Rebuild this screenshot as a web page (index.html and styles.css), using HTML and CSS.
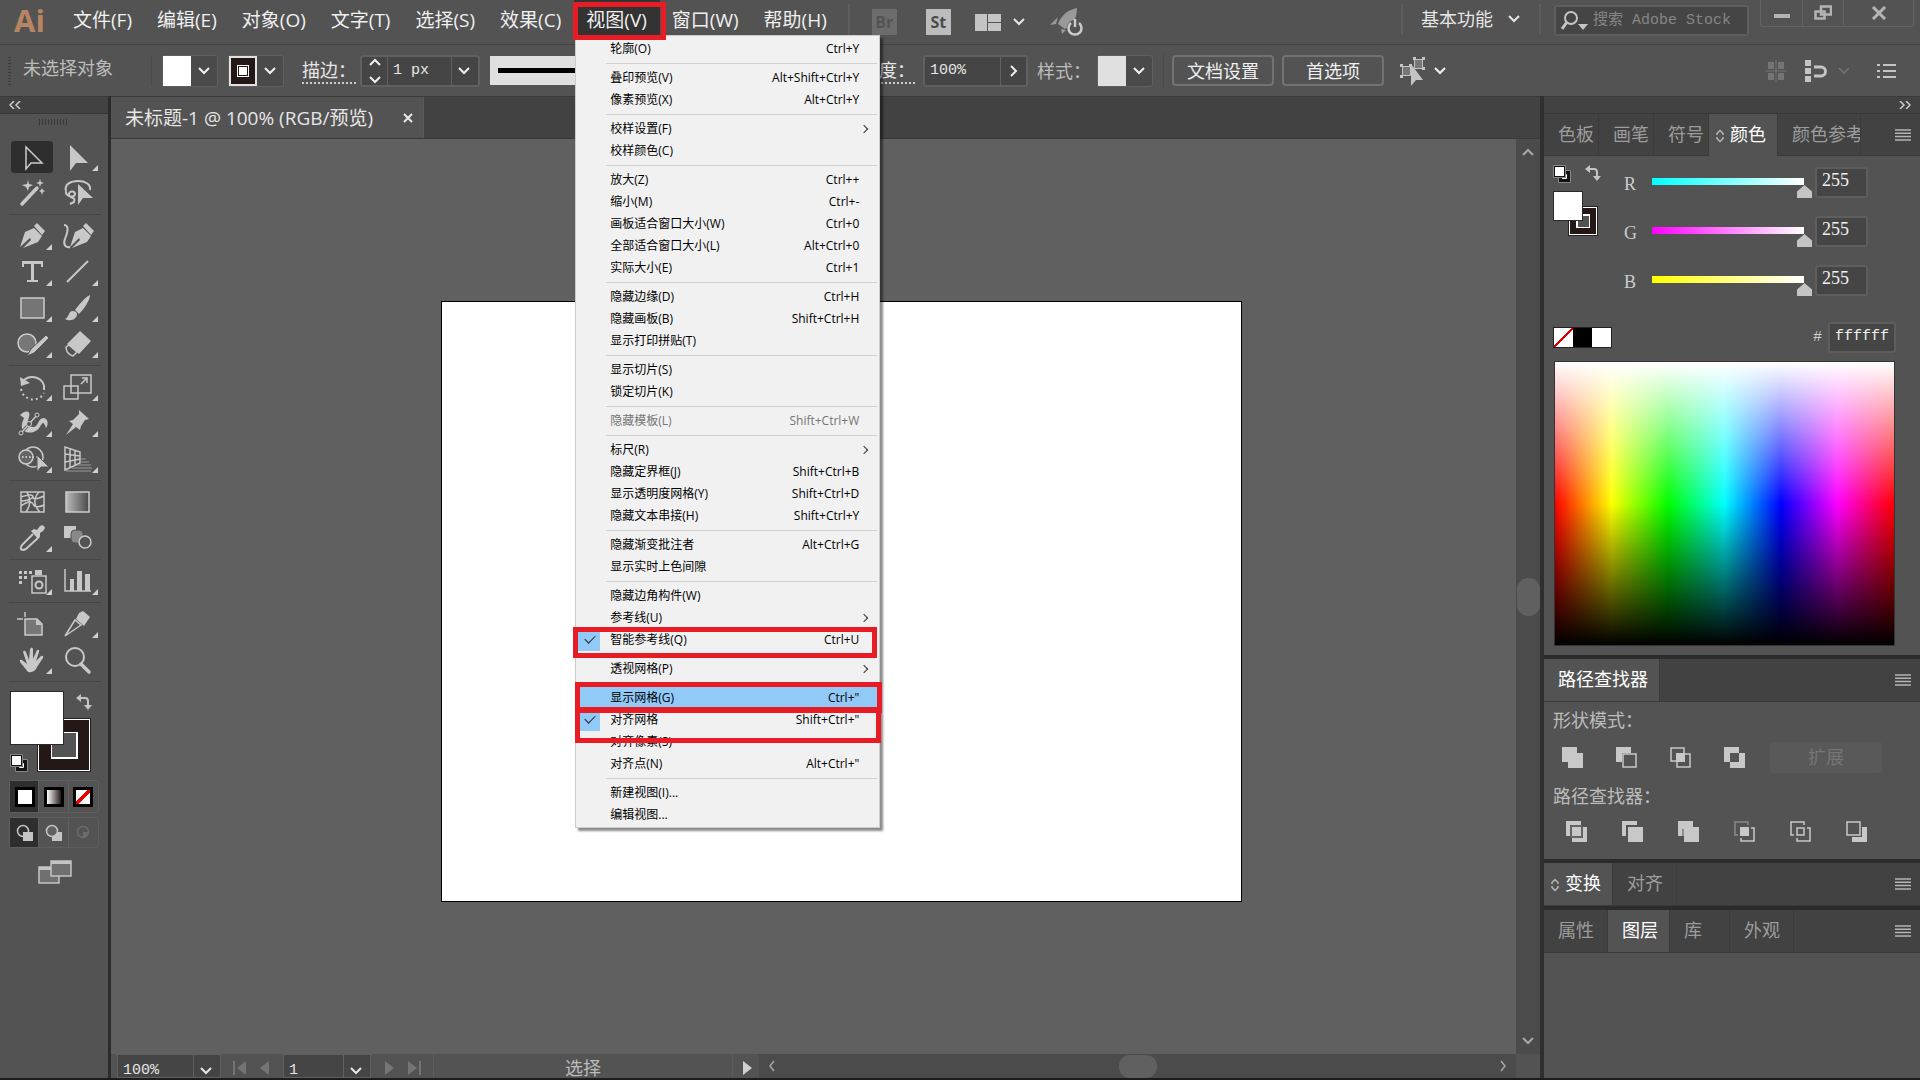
FILE: index.html
```
<!DOCTYPE html>
<html lang="zh-CN">
<head>
	<meta charset="UTF-8">
	<meta name="viewport" content="width=device-width, initial-scale=1.0">
	<title>未标题-1 @ 100% (RGB/预览)</title>
	<link rel="stylesheet" href="styles.css">
</head>
<body>
<svg class="defs" width="0" height="0">
	<symbol id="down" viewBox="0 0 14 10"><path d="M2 2l5 5 5-5" fill="none" stroke="currentColor" stroke-width="2"/></symbol>
	<symbol id="lines" viewBox="0 0 16 12"><path d="M0 1h16M0 4.300h16M0 7.600h16M0 11h16" stroke="currentColor" stroke-width="1.500"/></symbol>
	<symbol id="updown" viewBox="0 0 8 14"><path d="M1 6V4.500L4 1.500l3 3V6M1 8v1.500l3 3 3-3V8" fill="none" stroke="currentColor" stroke-width="1.500"/></symbol>
	<symbol id="swap" viewBox="0 0 16 16"><path d="M4 4h5q3 0 3 3v5" fill="none" stroke="currentColor" stroke-width="2"/><path d="M5 0v8L0 4zM8 11h8l-4 5z" fill="currentColor"/></symbol>
	<symbol id="default" viewBox="0 0 18 18"><path d="M5.500 5.500h12v12h-12z" fill="#111" stroke="#888"/><path d="M9.500 9.500h4v4h-4z" fill="#535353" stroke="#fff"/><path d="M.5.5h12v12H.5z" fill="#111" stroke="#888"/><path d="M2 2h9v9H2z" fill="#fff"/></symbol>
	<symbol id="fly" viewBox="0 0 42 32"><path d="M41 24v6h-6z" fill="#d0d0d0"/></symbol>
</svg>

<!-- 菜单栏 -->
<header class="menubar">
	<div class="logo">Ai</div>
	<nav class="menus">
		<button type="button">文件(F)</button>
		<button type="button">编辑(E)</button>
		<button type="button">对象(O)</button>
		<button type="button">文字(T)</button>
		<button type="button">选择(S)</button>
		<button type="button">效果(C)</button>
		<div class="open">
			<button type="button" aria-expanded="true">视图(V)</button>
			<ul class="dropdown">
				<li><span>轮廓(O)</span><kbd>Ctrl+Y</kbd></li>
				<li class="sep"></li>
				<li><span>叠印预览(V)</span><kbd>Alt+Shift+Ctrl+Y</kbd></li>
				<li><span>像素预览(X)</span><kbd>Alt+Ctrl+Y</kbd></li>
				<li class="sep"></li>
				<li class="sub"><span>校样设置(F)</span></li>
				<li><span>校样颜色(C)</span></li>
				<li class="sep"></li>
				<li><span>放大(Z)</span><kbd>Ctrl++</kbd></li>
				<li><span>缩小(M)</span><kbd>Ctrl+-</kbd></li>
				<li><span>画板适合窗口大小(W)</span><kbd>Ctrl+0</kbd></li>
				<li><span>全部适合窗口大小(L)</span><kbd>Alt+Ctrl+0</kbd></li>
				<li><span>实际大小(E)</span><kbd>Ctrl+1</kbd></li>
				<li class="sep"></li>
				<li><span>隐藏边缘(D)</span><kbd>Ctrl+H</kbd></li>
				<li><span>隐藏画板(B)</span><kbd>Shift+Ctrl+H</kbd></li>
				<li><span>显示打印拼贴(T)</span></li>
				<li class="sep"></li>
				<li><span>显示切片(S)</span></li>
				<li><span>锁定切片(K)</span></li>
				<li class="sep"></li>
				<li class="disabled"><span>隐藏模板(L)</span><kbd>Shift+Ctrl+W</kbd></li>
				<li class="sep"></li>
				<li class="sub"><span>标尺(R)</span></li>
				<li><span>隐藏定界框(J)</span><kbd>Shift+Ctrl+B</kbd></li>
				<li><span>显示透明度网格(Y)</span><kbd>Shift+Ctrl+D</kbd></li>
				<li><span>隐藏文本串接(H)</span><kbd>Shift+Ctrl+Y</kbd></li>
				<li class="sep"></li>
				<li><span>隐藏渐变批注者</span><kbd>Alt+Ctrl+G</kbd></li>
				<li><span>显示实时上色间隙</span></li>
				<li class="sep"></li>
				<li><span>隐藏边角构件(W)</span></li>
				<li class="sub"><span>参考线(U)</span></li>
				<li class="checked"><span>智能参考线(Q)</span><kbd>Ctrl+U</kbd><i class="mark mark-guides"></i></li>
				<li class="sep"></li>
				<li class="sub"><span>透视网格(P)</span></li>
				<li class="sep"></li>
				<li class="hover"><span>显示网格(G)</span><kbd>Ctrl+"</kbd><i class="mark mark-grid"></i></li>
				<li class="checked"><span>对齐网格</span><kbd>Shift+Ctrl+"</kbd><i class="mark mark-snap"></i></li>
				<li><span>对齐像素(S)</span></li>
				<li><span>对齐点(N)</span><kbd>Alt+Ctrl+"</kbd></li>
				<li class="sep"></li>
				<li><span>新建视图(I)...</span></li>
				<li><span>编辑视图...</span></li>
			</ul>
			<i class="mark mark-menu"></i>
		</div>
		<button type="button">窗口(W)</button>
		<button type="button">帮助(H)</button>
	</nav>
	<div class="apps">
		<button type="button" class="app dim">Br</button>
		<button type="button" class="app">St</button>
		<button type="button" class="arrange" aria-label="排列文档">
			<svg width="26" height="17"><path d="M0 0h12v17H0zM13 0h13v8H13zM13 9h13v8H13z" fill="#c4c4c4"/></svg>
			<svg width="14" height="10"><use href="#down"/></svg>
		</button>
		<button type="button" aria-label="GPU 预览">
			<svg width="34" height="28" viewBox="0 0 34 28"><path d="M27 0C17 2 11 8 8 16l7 5C23 17 27 10 27 0zM8 9L0 17l6-1zM11 21l1 5 4-4z" fill="#999"/><circle cx="25" cy="20" r="8" fill="#535353"/><path d="M21 15a6.500 6.500 0 1 0 8 0M25 11v8" fill="none" stroke="#ccc" stroke-width="2.500"/></svg>
		</button>
	</div>
	<div class="account">
		<button type="button" class="workspace-name">基本功能 <svg width="14" height="10"><use href="#down"/></svg></button>
		<label class="search">
			<svg width="28" height="22" viewBox="0 0 28 22"><circle cx="10" cy="8" r="6" fill="none" stroke="#c4c4c4" stroke-width="2"/><path d="M6 12l-5 7" stroke="#c4c4c4" stroke-width="3"/><path d="M17 14h10l-5 6z" fill="#c4c4c4"/></svg>
			<input type="text" placeholder="搜索 Adobe Stock">
		</label>
		<div class="winbtns">
			<button type="button" aria-label="最小化"><svg width="16" height="16"><path d="M0 9h16v4H0z" fill="#b4b4b4"/></svg></button>
			<button type="button" aria-label="还原"><svg width="18" height="16"><path d="M7 1.500h10v8H7zM1.500 6.500h9v7h-9z" fill="#535353" stroke="#b4b4b4" stroke-width="2.500"/></svg></button>
			<button type="button" aria-label="关闭"><svg width="16" height="14"><path d="M2 1l12 12M14 1L2 13" stroke="#b4b4b4" stroke-width="3"/></svg></button>
		</div>
	</div>
</header>

<!-- 控制栏 -->
<div class="controlbar">
	<i class="grip"></i>
	<span class="status-name">未选择对象</span>
	<button type="button" class="picker" aria-label="填色"><i class="chip white"></i><svg width="14" height="10"><use href="#down"/></svg></button>
	<button type="button" class="picker" aria-label="描边"><i class="chip ring"></i><svg width="14" height="10"><use href="#down"/></svg></button>
	<label class="dotted" for="weight">描边：</label>
	<div class="weight">
		<button type="button" aria-label="微调"><svg width="14" height="26" viewBox="0 0 14 26"><path d="M2 7l5-5 5 5M2 19l5 5 5-5" fill="none" stroke="#eee" stroke-width="2"/></svg></button>
		<div class="combo"><select id="weight"><option>1 px</option></select><svg width="14" height="10"><use href="#down"/></svg></div>
	</div>
	<button type="button" class="brush" aria-label="画笔定义"></button>
	<label class="dotted" for="opacity">不透明度：</label>
	<div class="opacity"><input id="opacity" type="text" value="100%"><button type="button" aria-label="不透明度选项"><svg width="8" height="14"><path d="M1 2l5 5-5 5" fill="none" stroke="#eee" stroke-width="2"/></svg></button></div>
	<span class="style-label">样式：</span>
	<button type="button" class="picker" aria-label="样式"><i class="chip"></i><svg width="14" height="10"><use href="#down"/></svg></button>
	<i class="rule"></i>
	<button type="button" class="outlined">文档设置</button>
	<button type="button" class="outlined">首选项</button>
	<button type="button" class="similar" aria-label="选择类似的对象">
		<svg width="26" height="32" viewBox="0 0 26 32"><path d="M2.500 11.500h8v9h-8zM14.500 4.500h8v9h-8z" fill="#777" stroke="#c4c4c4"/><path d="M0 9h3v3H0zM0 20h3v3H0zM9 9h3v3H9zM13 2h3v3h-3zM22 2h3v3h-3zM22 12h3v3h-3z" fill="#c4c4c4"/><path d="M11 9v22l5-6h7z" fill="#c4c4c4"/></svg>
		<svg width="14" height="10"><use href="#down"/></svg>
	</button>
	<div class="control-end">
		<svg width="22" height="22" viewBox="0 0 22 22"><path d="M3 2h6v7H3zM13 2h6v7h-6zM3 13h6v7H3zM13 13h6v7h-6zM0 10.500h22v1H0zM10.500 0h1v22h-1z" fill="#757575"/></svg>
		<svg class="magnet" width="44" height="22" viewBox="0 0 44 22"><path d="M0 0h6v6H0zM0 8h6v6H0zM0 16h6v6H0z" fill="#c4c4c4"/><path d="M9 7h7a4 4 0 0 1 0 9H9" fill="none" stroke="#c4c4c4" stroke-width="3"/><path d="M34 8l5 5 5-5" fill="none" stroke="#757575" stroke-width="1.500"/></svg>
		<svg width="19" height="16" viewBox="0 0 19 16"><path d="M0 2h3M6 2h13M0 8h3M6 8h13M0 14h3M6 14h13" stroke="#c4c4c4" stroke-width="2"/></svg>
	</div>
</div>

<main class="workspace">
	<!-- 工具面板 -->
	<aside class="tools">
		<div class="collapse"><svg width="12" height="8"><path d="M5 0L1 4l4 4M11 0L7 4l4 4" fill="none" stroke="#ccc" stroke-width="1.500"/></svg></div>
		<i class="tool-grip"></i>
		<div class="group">
			<button type="button" class="on" aria-label="选择工具"><svg viewBox="0 0 42 32"><path d="M15 6v22l5-6h11z" fill="none" stroke="#ccc" stroke-width="1.500"/></svg></button>
			<button type="button" aria-label="直接选择工具"><svg viewBox="0 0 42 32"><path d="M13 4v26l6-8h12z"/><use href="#fly"/></svg></button>
			<button type="button" aria-label="魔棒工具"><svg viewBox="0 0 42 32"><path d="M11 27L26 11" class="s3"/><path d="M17 3l1 4 4 1-4 2-1 4-2-4-4-2 5-1zM29 2l1 3 3 1-3 1-1 3-1-3-3-1 3-1zM31 11l1 2 2 1-2 1-1 3-1-3-2-1 2-1z"/></svg></button>
			<button type="button" aria-label="套索工具"><svg viewBox="0 0 42 32"><path d="M9 14C7 7 14 4 21 4s13 3 12 9M9 14c-1 5 8 8 9 3 0-4-7-3-6 1s7 1 5 7l-4 2" class="s2"/><path d="M21 7v21l5-7h10z"/></svg></button>
		</div>
		<div class="group">
			<button type="button" aria-label="钢笔工具"><svg viewBox="0 0 42 32"><path d="M9 27l5-15 9-4 8 8-4 6-15 6 8-8-1-2z"/><path d="M23 6l3-3 8 8-3 4z"/><use href="#fly"/></svg></button>
			<button type="button" aria-label="曲率工具"><svg viewBox="0 0 42 32"><path d="M13 27l5-15 8-4 8 8-4 6-15 6 8-8-1-2z"/><path d="M26 6l3-3 8 8-3 4z"/><path d="M7 5c6 0 3 9 1 14s0 9 5 8" class="s2"/></svg></button>
			<button type="button" aria-label="文字工具"><svg viewBox="0 0 42 32"><path d="M11 5h21v6h-2V8h-7v16h4v2H16v-2h4V8h-7v3h-2z"/><use href="#fly"/></svg></button>
			<button type="button" aria-label="直线段工具"><svg viewBox="0 0 42 32"><path d="M10 26L31 5" class="s2"/><use href="#fly"/></svg></button>
			<button type="button" aria-label="矩形工具"><svg viewBox="0 0 42 32"><path d="M10 6h23v20H10z" fill="#757575" stroke="#ccc" stroke-width="1.500"/><use href="#fly"/></svg></button>
			<button type="button" aria-label="画笔工具"><svg viewBox="0 0 42 32"><path d="M33 3C28 5 22 13 18 18l4 4c4-4 11-13 11-19zM8 27c4-1 3-8 8-8 4 0 5 4 3 6-2 4-8 4-11 2z"/><use href="#fly"/></svg></button>
			<button type="button" aria-label="Shaper 工具"><svg viewBox="0 0 42 32"><circle cx="16" cy="15" r="9" fill="#777" stroke="#ccc" stroke-width="1.500"/><path d="M35 7l3 3-15 15-7 3 4-7z" stroke="#535353"/><use href="#fly"/></svg></button>
			<button type="button" aria-label="橡皮擦工具"><svg viewBox="0 0 42 32"><path d="M23 3l11 10-12 13L10 16z"/><path d="M9 19l3-2 8 7-4 4q-7-2-7-9z" class="s1"/><use href="#fly"/></svg></button>
		</div>
		<div class="group">
			<button type="button" aria-label="旋转工具"><svg viewBox="0 0 42 32"><path d="M12 10c8-8 23-3 21 9" class="s2"/><path d="M9 6l10 6-9 3z"/><path d="M10 18c2 12 18 14 23 4" class="s2" stroke-dasharray="2 3"/><use href="#fly"/></svg></button>
			<button type="button" aria-label="比例缩放工具"><svg viewBox="0 0 42 32"><path d="M14 4h20v18H14zM7 15h14v13H7zM24 13l6-6M25 7h5v5" class="s1"/><use href="#fly"/></svg></button>
			<button type="button" aria-label="宽度工具"><svg viewBox="0 0 42 32"><path d="M9 8c6-6 11-4 9 2s-2 10 4 10 5-10 11-9c5 1 4 8 2 10-2-6-3-6-5-3-4 9-14 9-18 5-3-4 0-9 1-12z"/><path d="M11 25L26 8" stroke="#535353" stroke-width="3"/><path d="M11 25L26 8" class="s1"/><g fill="#535353" stroke="#ccc"><circle cx="10" cy="26" r="2"/><circle cx="18" cy="17" r="2.500"/><circle cx="26" cy="8" r="2"/></g><use href="#fly"/></svg></button>
			<button type="button" aria-label="操控变形工具"><svg viewBox="0 0 42 32"><path d="M22 3l10 9-4 1-4 6-1 4-4-3-10 8 7-11-4-3 4-1 6-6z"/><use href="#fly"/></svg></button>
			<button type="button" aria-label="形状生成器工具"><svg viewBox="0 0 42 32"><circle cx="22" cy="14" r="10" class="s1"/><circle cx="15" cy="14" r="7" fill="#666" stroke="#ccc" stroke-width="1.500"/><path d="M11 14h16" class="s2" stroke-dasharray="1.500 2"/><path d="M26 12v17l4-5h8z" stroke="#535353"/><use href="#fly"/></svg></button>
			<button type="button" aria-label="透视网格工具"><svg viewBox="0 0 42 32"><path d="M8 4v23l15-7V9zM8 11l15 2M8 19l15-3M13 6v19M18 7v15" class="s1"/><path d="M24 16h5M23 19h9M20 22h14M15 25h20M9 28h25" stroke="#999"/><use href="#fly"/></svg></button>
		</div>
		<div class="group">
			<button type="button" aria-label="网格工具"><svg viewBox="0 0 42 32"><path d="M10 6h23v20H10zM10 11q12-4 12 0t11-1M10 20q10-7 12-2t11 1M16 6q6 10-1 20M28 6q-9 10 1 20M10 15q8 0 12-4" class="s1"/></svg></button>
			<button type="button" aria-label="渐变工具"><svg viewBox="0 0 42 32"><defs><linearGradient id="g1"><stop stop-color="#bbb"/><stop offset="1" stop-color="#484848"/></linearGradient></defs><path d="M9 6h23v20H9z" fill="url(#g1)" stroke="#ccc" stroke-width="1.500"/></svg></button>
			<button type="button" aria-label="吸管工具"><svg viewBox="0 0 42 32"><path d="M22 12L11 23q-3 5 1 5 4-1 5-3l10-9" class="s2"/><path d="M20 9l3-2 3 1 3-4q4-2 5 2-1 3-5 5v4l-2 2z"/><use href="#fly"/></svg></button>
			<button type="button" aria-label="混合工具"><svg viewBox="0 0 42 32"><path d="M7 4h12v12H7z"/><rect x="14" y="8" width="12" height="13" rx="4" fill="#888" stroke="#535353"/><circle cx="28" cy="20" r="6" fill="#535353" stroke="#ccc" stroke-width="1.500"/></svg></button>
		</div>
		<div class="group">
			<button type="button" aria-label="符号喷枪工具"><svg viewBox="0 0 42 32"><path d="M21 11h14v17H21z" class="s1"/><path d="M24 5h7v5h-7z"/><circle cx="28" cy="20" r="3.500" class="s2"/><path d="M8 6h3v3H8zM13 6h3v3h-3zM18 6h3v3h-3zM8 11h3v3H8zM13 11h3v3h-3zM8 16h3v3H8z"/><use href="#fly"/></svg></button>
			<button type="button" aria-label="柱形图工具"><svg viewBox="0 0 42 32"><path d="M8 4v22h26" class="s1"/><path d="M13 14h4v12h-4zM20 6h5v20h-5zM28 9h5v17h-5z"/><use href="#fly"/></svg></button>
		</div>
		<div class="group">
			<button type="button" aria-label="画板工具"><svg viewBox="0 0 42 32"><path d="M14 11h12l5 5v11H14z" fill="#777" stroke="#ccc" stroke-width="1.500"/><path d="M25 11v6h6z"/><path d="M6 11h6M14 4v5" class="s1"/></svg></button>
			<button type="button" aria-label="切片工具"><svg viewBox="0 0 42 32"><path d="M8 28l10-16 6 5z" class="s1"/><path d="M22 5l4-2 7 6-6 9-8-7z"/><use href="#fly"/></svg></button>
			<button type="button" aria-label="抓手工具"><svg viewBox="0 0 42 32"><path d="M17 28l-8-10q-1-3 2-2l5 4-4-12q1-3 3 0l3 8 1-11q2-3 3 0v10l4-9q3-1 2 2l-3 9 5-5q3-1 2 2l-6 9q-2 6-9 5z"/><use href="#fly"/></svg></button>
			<button type="button" aria-label="缩放工具"><svg viewBox="0 0 42 32"><circle cx="18" cy="13" r="9" class="s2"/><path d="M24 20l8 8" class="s3"/></svg></button>
		</div>
		<div class="colors">
			<i class="stroke-box"></i>
			<i class="fill-box"></i>
			<svg class="swap-icon" width="16" height="16"><use href="#swap"/></svg>
			<svg class="default-icon" width="18" height="18"><use href="#default"/></svg>
		</div>
		<div class="modes">
			<button type="button" class="on" aria-label="颜色"><i class="mode-chip"></i></button>
			<button type="button" aria-label="渐变"><i class="mode-chip fade"></i></button>
			<button type="button" aria-label="无"><i class="mode-chip none"></i></button>
		</div>
		<div class="modes draw">
			<button type="button" class="on" aria-label="正常绘图"><svg width="18" height="18"><circle cx="7" cy="7" r="5.500" fill="none" stroke="#c4c4c4" stroke-width="1.500"/><path d="M7 8h10v9H7z" fill="#c4c4c4"/></svg></button>
			<button type="button" aria-label="背面绘图"><svg width="18" height="18"><path d="M7 8h10v9H7z" fill="#c4c4c4"/><circle cx="7" cy="7" r="5.500" fill="#606060" stroke="#c4c4c4" stroke-width="1.500"/></svg></button>
			<button type="button" aria-label="内部绘图"><svg width="18" height="18"><circle cx="9" cy="8" r="5.500" fill="none" stroke="#6c6c6c" stroke-width="1.500"/><path d="M9 8h5q0 5-5 5z" fill="#6c6c6c"/></svg></button>
		</div>
		<button type="button" class="screen" aria-label="更改屏幕模式"><svg width="34" height="26" viewBox="0 0 34 26"><path d="M1 8h20v16H1z" fill="#707070" stroke="#c4c4c4" stroke-width="1.500"/><path d="M1 8h12v3H1z" fill="#c4c4c4"/><path d="M13 2h20v15H13z" fill="#707070" stroke="#c4c4c4" stroke-width="1.500"/><path d="M13 2h20v3H13z" fill="#c4c4c4"/></svg></button>
	</aside>

	<!-- 文档窗口 -->
	<section class="document">
		<div class="doctabs"><button type="button" class="doctab">未标题-1 @ 100% (RGB/预览)<svg width="10" height="10"><path d="M1 1l8 8M9 1L1 9" stroke="#e8e8e8" stroke-width="2"/></svg></button></div>
		<div class="stage">
			<div class="canvas"><div class="artboard"></div></div>
			<div class="vscroll">
				<svg width="14" height="10"><path d="M2 8l5-5 5 5" fill="none" stroke="#a8a8a8" stroke-width="2"/></svg>
				<i></i>
				<svg width="14" height="10"><path d="M2 2l5 5 5-5" fill="none" stroke="#a8a8a8" stroke-width="2"/></svg>
			</div>
		</div>
		<footer class="statusbar">
			<div class="combo zoom"><select aria-label="缩放"><option>100%</option></select><svg width="14" height="10"><use href="#down"/></svg></div>
			<svg class="nav" width="62" height="18"><path d="M12 2h2v14h-2zM25 2v14l-9-7zM48 2v14l-9-7z" fill="#757575"/></svg>
			<div class="combo board"><select aria-label="画板"><option>1</option></select><svg width="14" height="10"><use href="#down"/></svg></div>
			<svg class="nav" width="62" height="18"><path d="M14 2v14l9-7zM37 2v14l9-7zM48 2h2v14h-2z" fill="#757575"/></svg>
			<span class="current">选择</span>
			<svg class="nav" width="26" height="18"><path d="M10 2v14l9-7z" fill="#d0d0d0"/></svg>
			<div class="hscroll">
				<svg width="8" height="14"><path d="M6 2L2 7l4 5" fill="none" stroke="#a8a8a8" stroke-width="1.500"/></svg>
				<i></i>
				<svg width="8" height="14"><path d="M2 2l4 5-4 5" fill="none" stroke="#a8a8a8" stroke-width="1.500"/></svg>
			</div>
			<i class="corner"></i>
		</footer>
	</section>

	<!-- 右侧面板 -->
	<aside class="panels">
		<div class="collapse end"><svg width="12" height="8"><path d="M1 0l4 4-4 4M7 0l4 4-4 4" fill="none" stroke="#ccc" stroke-width="1.500"/></svg></div>
		<div class="tabs">
			<button type="button">色板</button>
			<button type="button">画笔</button>
			<button type="button">符号</button>
			<button type="button" class="active"><svg width="8" height="14"><use href="#updown"/></svg>颜色</button>
			<button type="button" class="cut">颜色参考</button>
			<svg class="panel-menu" width="16" height="12"><use href="#lines"/></svg>
		</div>
		<div class="color-panel">
			<div class="rgb">
				<div class="mini">
					<svg width="18" height="18"><use href="#default"/></svg>
					<svg width="16" height="16"><use href="#swap"/></svg>
					<div class="mini-boxes"><i class="stroke-box"></i><i class="fill-box"></i></div>
				</div>
				<div class="sliders">
					<label for="r">R</label><input id="r" class="r" type="range" max="255" value="255"><input type="text" aria-label="R 值" value="255">
					<label for="g">G</label><input id="g" class="g" type="range" max="255" value="255"><input type="text" aria-label="G 值" value="255">
					<label for="b">B</label><input id="b" class="b" type="range" max="255" value="255"><input type="text" aria-label="B 值" value="255">
				</div>
			</div>
			<div class="hexrow">
				<div class="presets"><i class="none"></i><i class="black"></i><i></i></div>
				<label for="hex">#</label><input id="hex" type="text" value="ffffff">
			</div>
			<div class="spectrum"></div>
		</div>
		<div class="tabs split">
			<button type="button" class="active">路径查找器</button>
			<svg class="panel-menu" width="16" height="12"><use href="#lines"/></svg>
		</div>
		<div class="pathfinder">
			<h3>形状模式：</h3>
			<div class="shapes">
				<svg width="21" height="21"><path d="M0 0h15v6h6v15H6v-6H0z"/></svg>
				<svg width="21" height="21"><path d="M0 0h15v6H6v9H0z"/><path d="M7 7h13v13H7z" class="line"/></svg>
				<svg width="21" height="21"><path d="M1 1h13v13H1zM7 7h13v13H7z" class="line"/><path d="M6 6h9v9H6z"/></svg>
				<svg width="21" height="21"><path fill-rule="evenodd" d="M0 0h15v6h6v15H6v-6H0zM6 6v9h9V6z"/></svg>
				<button type="button" disabled>扩展</button>
			</div>
			<h3>路径查找器：</h3>
			<div class="shapes six">
				<svg width="21" height="21"><path d="M0 0h15v4H4v11H0zM17 6h4v15H6v-4h11zM6 6h9v9H6z"/><path d="M5 5h11v11H5z" class="thin"/></svg>
				<svg width="21" height="21"><path d="M0 0h15v4H4v11H0zM6 6h15v15H6z"/></svg>
				<svg width="21" height="21"><path d="M0 0h15v6h6v15H6v-6H0z"/><path d="M5 8v8" stroke="#535353"/></svg>
				<svg width="21" height="21"><path d="M14 4V1H1v13h3" class="line faint"/><path d="M17 7h3v13H7v-3" class="line"/><path d="M6 6h9v9H6z"/></svg>
				<svg width="21" height="21"><path d="M14 4V1H1v13h3M17 7h3v13H7v-3M7 7h7v7H7z" class="line"/></svg>
				<svg width="21" height="21"><path d="M1 1h13v13H1z" class="line"/><path d="M16 6h5v15H6v-5h10z"/></svg>
			</div>
		</div>
		<div class="tabs split">
			<button type="button" class="active"><svg width="8" height="14"><use href="#updown"/></svg>变换</button>
			<button type="button">对齐</button>
			<svg class="panel-menu" width="16" height="12"><use href="#lines"/></svg>
		</div>
		<div class="tabs split wide">
			<button type="button">属性</button>
			<button type="button" class="active">图层</button>
			<button type="button">库</button>
			<button type="button">外观</button>
			<svg class="panel-menu" width="16" height="12"><use href="#lines"/></svg>
		</div>
	</aside>
</main>
</body>
</html>
```
FILE: styles.css
```
*{box-sizing:border-box;}
html,body{height:100%;overflow:hidden;}
body,ul,li,h3{margin:0;padding:0;}
body{display:flex;flex-direction:column;background:#535353;color:#e6e6e6;font:18px/24px "Open Sans","Noto Sans CJK SC",sans-serif;border-bottom:2px solid #1c1c1c;}
ul{list-style:none;}
i{display:block;font-style:normal;}
svg{display:block;flex:none;}
button,input,select{margin:0;padding:0;border:0;background:none;color:inherit;font:inherit;border-radius:0;}
button{display:flex;align-items:center;justify-content:center;white-space:nowrap;}
input,select{min-width:0;appearance:none;outline:none;}
.defs{position:absolute;}

/* menu bar */
.menubar{display:flex;flex:none;height:44px;padding-left:14px;}
.logo{width:47px;padding-top:3px;color:#b98462;font:bold 31px/34px "Open Sans",sans-serif;}
.menus{display:flex;height:40px;font-size:19px;line-height:24px;}
.menus button{height:40px;padding:0 13px 0 12px;color:#f0f0f0;}
.open{position:relative;z-index:5;}
.open>button{background:#333;}
.dropdown{position:absolute;top:35px;left:1px;width:305px;padding:2px 2px 1px;border:1px solid #ccc;background:#f1f1f1;box-shadow:3px 3px 2px rgba(0,0,0,.45);color:#000;font-size:12px;line-height:22px;}
.dropdown li{position:relative;display:flex;justify-content:space-between;height:22px;padding:0 18px 0 32px;white-space:nowrap;}
.dropdown kbd{font:inherit;}
.dropdown .sep{height:7px;padding:0;}
.dropdown .sep:before{content:"";height:1px;margin:3px 0 0 28px;flex:1;background:#d0d0d0;}
.dropdown .disabled{color:#757575;}
.dropdown .hover{background:#91c9f7;}
.dropdown .sub:after{content:"";width:5px;height:5px;margin:8px -8px 0 0;border:solid #333;border-width:1px 1px 0 0;transform:rotate(45deg);}
.dropdown .checked{background:linear-gradient(#91c9f7,#91c9f7) 0 0/22px 22px no-repeat;}
.dropdown .checked:before{content:"";position:absolute;left:7px;top:6px;width:9px;height:5px;border:solid #223;border-width:0 0 1px 1px;transform:rotate(-45deg);}
.mark{position:absolute;z-index:2;border:5px solid #e81c24;}
.mark-menu{top:2px;left:-1px;width:93px;height:38px;}
.mark-guides{inset:-2px 0 -7px -5px;}
.mark-grid{inset:-5px -5px -4px -3px;z-index:3;}
.mark-snap{inset:-2px -4px -12px -3px;}
.apps{display:flex;align-items:center;height:36px;margin:4px 0 0 8px;padding-left:22px;border-left:2px solid #5e5e5e;}
.app{width:25px;height:26px;margin-right:29px;background:#bcbcbc;color:#4c4c4c;font:bold 16px/26px "Open Sans",sans-serif;}
.app.dim{background:#6c6c6c;color:#535353;}
.arrange{gap:11px;margin:0 24px 0 -5px;}
.account{display:flex;margin-left:auto;}
.workspace-name{gap:14px;height:30px;margin-top:4px;padding:0 18px;border:solid #5e5e5e;border-width:0 2px;}
.search{display:flex;align-items:center;gap:4px;width:195px;height:31px;margin:5px 11px 0 13px;padding-left:5px;border:2px solid #5e5e5e;border-radius:3px;background:#454545;}
.search input{width:150px;font:15px/24px "Liberation Mono","Noto Sans CJK SC",monospace;}
.search input::placeholder{color:#858585;}
.winbtns{display:flex;height:27px;margin-right:6px;border:1px solid #626262;border-top:0;border-radius:0 0 3px 3px;}
.winbtns button{width:41px;}
.winbtns button+button{border-left:1px solid #626262;}
.winbtns button:last-child{width:70px;}

/* control bar */
.controlbar{display:flex;flex:none;align-items:center;height:52px;padding:0 24px 0 8px;border-top:1px solid #424242;white-space:nowrap;}
.controlbar>*{flex:none;}
.controlbar svg{color:#f0f0f0;}
.grip{width:3px;height:28px;background:repeating-linear-gradient(#3c3c3c 0 1px,#535353 1px 3px);}
.status-name{width:141px;padding:0 0 6px 12px;color:#bcbcbc;border-right:1px solid #4a4a4a;}
.picker{height:32px;margin-left:10px;padding-right:6px;gap:6px;border:1px solid #606060;border-radius:3px;background:#4a4a4a;}
.chip{width:28px;height:30px;background:#e0e0e0;}
.chip.white{background:#fff;}
.chip.ring{border:2px solid #e0e0e0;background:linear-gradient(#fff,#fff) center/8px 8px no-repeat,linear-gradient(#231815,#231815) center/10px 10px no-repeat,linear-gradient(#fff,#fff) center/12px 12px no-repeat,#231815;}
.dotted{margin:0 4px 0 18px;border-bottom:2px dotted #ccc;}
.weight,.opacity{display:flex;height:32px;border:2px solid #606060;border-radius:3px;background:#454545;font:15px/24px "Liberation Mono",monospace;}
.weight>button{width:26px;border-right:1px solid #606060;}
.combo{display:grid;align-items:center;justify-items:end;padding-right:7px;}
.combo>*{grid-area:1/1;}
.combo select{justify-self:stretch;align-self:stretch;margin-right:-7px;padding-left:5px;background:linear-gradient(#606060,#606060) right 26px top 0/1px 100% no-repeat;font:15px/24px "Liberation Mono",monospace;}
.combo svg{pointer-events:none;}
.weight .combo{width:90px;}
.brush{width:321px;height:29px;margin-left:10px;background:linear-gradient(#000,#000) 8px 12px/300px 5px no-repeat #e0e0e0;}
.brush+.dotted{margin:0 8px 0 14px;}
.opacity input{width:75px;padding-left:5px;}
.opacity button{width:26px;border-left:1px solid #606060;}
.style-label{margin:0 -4px 0 9px;color:#bcbcbc;}
.rule{width:1px;height:36px;margin:0 8px 0 10px;background:#4a4a4a;}
.outlined{width:102px;height:31px;margin-right:8px;border:2px solid #727272;border-radius:4px;color:#f0f0f0;}
.similar{gap:7px;margin-left:8px;}
.control-end{display:flex;align-items:center;gap:18px;margin-left:auto;}
.control-end .magnet{margin-right:10px;}

.workspace{display:flex;flex:1;min-height:0;}

/* tools */
.tools{flex:none;width:111px;border-right:3px solid #2c2c2c;background:#535353;}
.collapse{display:flex;align-items:center;height:18px;padding-left:9px;border-top:1px solid #3a3a3a;border-bottom:1px solid #383838;background:#424242;}
.collapse.end{justify-content:flex-end;padding-right:9px;}
.tool-grip{width:28px;height:6px;margin:5px auto 11px 39px;background:repeating-linear-gradient(90deg,#383838 0 1px,#535353 1px 3px);}
.group{display:grid;grid-template-columns:46px 46px;grid-auto-rows:36px;place-items:center;width:92px;margin-left:9px;padding:3px 0;border-bottom:1px solid #464646;}
.group button{width:42px;height:32px;border-radius:3px;}
.group .on{background:#2e2e2e;}
.group svg{width:42px;height:32px;fill:#c8c8c8;}
.s1,.s2,.s3{fill:none;stroke:#c8c8c8;stroke-width:1.5;}
.s2{stroke-width:2;}
.s3{stroke-width:3.5;stroke-linecap:round;}
.colors{position:relative;width:82px;height:82px;margin:9px 0 8px 10px;color:#c4c4c4;}
.fill-box,.stroke-box{position:absolute;left:0;top:0;width:54px;height:54px;border:1px solid #2a2a2a;background:#fff;}
.stroke-box{left:27px;top:27px;border-color:#222;background:linear-gradient(#535353,#535353) center/24px 24px no-repeat,linear-gradient(#fff,#fff) center/27px 27px no-repeat,#231815;box-shadow:inset 0 0 0 1px #fff;}
.swap-icon{position:absolute;right:0;top:3px;}
.default-icon{position:absolute;left:0;bottom:1px;}
.modes{display:flex;width:88px;height:31px;margin:0 0 6px 10px;border-radius:3px;box-shadow:0 0 0 1px #5e5e5e;}
.modes button{flex:1;}
.modes button+button{box-shadow:-1px 0 #5e5e5e;}
.modes .on{background:#2e2e2e;}
.mode-chip{width:20px;height:20px;border:3px solid #000;background:#fff;}
.fade{background:linear-gradient(90deg,#fff,#231815);}
.mode-chip.none{background:linear-gradient(135deg,#fff 40%,#e00 40% 60%,#fff 60%);}
.draw{height:29px;}
.screen{margin:12px 0 0 38px;}

/* document */
.document{display:flex;flex:1;flex-direction:column;min-width:0;}
.doctabs{height:43px;flex:none;border-top:1px solid #3a3a3a;border-bottom:1px solid #3a3a3a;background:#424242;}
.doctab{gap:30px;height:41px;padding:0 10px 0 14px;border-right:1px solid #5a5a5a;background:#535353;font-size:19px;line-height:24px;}
.stage{display:flex;flex:1;min-height:0;}
.canvas{position:relative;flex:1;background:#606060;}
.artboard{position:absolute;left:330px;top:162px;width:801px;height:601px;border:1px solid #000;background:#fff;}
.vscroll{display:flex;flex-direction:column;align-items:center;justify-content:space-between;width:24px;padding:8px 0;background:#4b4b4b;}
.vscroll i{width:23px;height:38px;border-radius:11px;background:#606060;}
.statusbar{display:flex;align-items:center;flex:none;height:24px;background:#535353;}
.statusbar .combo{height:24px;padding-top:3px;border:1px solid #606060;background:#454545;}
.statusbar .combo select{margin-top:-3px;padding-top:4px;}
.statusbar .zoom{width:104px;margin-left:6px;}
.statusbar .board{width:88px;}
.nav{margin-top:4px;}
.current{width:300px;height:24px;padding-top:4px;border:solid #5c5c5c;border-width:0 1px;color:#bcbcbc;line-height:20px;text-align:center;}
.hscroll{display:flex;flex:1;align-items:center;justify-content:space-between;height:24px;padding:0 9px;background:#4b4b4b;}
.hscroll i{width:38px;height:23px;border-radius:11px;background:#606060;}
.corner{width:24px;height:24px;}

/* panels */
.panels{flex:none;width:380px;border-left:4px solid #2f2f2f;}
.tabs{display:flex;height:42px;padding-right:9px;border-bottom:1px solid #3a3a3a;background:#424242;}
.tabs button{height:41px;padding:0 4px 2px 14px;border-right:1px solid #3b3b3b;color:#9c9c9c;}
.tabs .active{height:42px;padding:0 11px 2px 14px;background:#535353;color:#fff;}
.tabs .active svg{margin:4px 6px 0 -7px;color:#b4b4b4;}
.tabs .cut{width:83px;padding-right:0;justify-content:flex-start;overflow:hidden;}
.panel-menu{margin:auto 0 auto auto;color:#b4b4b4;}
.split{box-sizing:content-box;border-top:4px solid #2c2c2c;}
.split button{padding:0 13px 2px 14px;}
.wide button{min-width:60px;justify-content:flex-start;}
.color-panel{padding:9px 24px 9px 9px;}
.rgb{display:flex;gap:23px;}
.mini{display:flex;flex-wrap:wrap;align-content:flex-start;justify-content:space-between;gap:8px 0;width:48px;color:#c4c4c4;}
.mini-boxes{position:relative;width:46px;height:46px;}
.mini .fill-box,.mini .stroke-box{width:30px;height:30px;}
.mini .stroke-box{left:15px;top:15px;background-size:11px 11px,14px 14px;}
.sliders{display:grid;grid-template-columns:28px 160px 53px;grid-auto-rows:49px;align-items:start;margin-top:2px;color:#ccc;font:18px/34px "Liberation Serif",serif;}
.sliders input[type=text],.hexrow input{height:31px;padding:0 0 6px 5px;border:2px solid #5e5e5e;border-radius:3px;background:#454545;color:#f0f0f0;}
.sliders input[type=text]{width:53px;margin-left:3px;}
.sliders input[type=range]{width:160px;height:20px;margin:11px 0 0;}
.sliders input::-webkit-slider-runnable-track{height:20px;background:linear-gradient(90deg,var(--tint),#fff) 0 0/152px 7px no-repeat;}
.sliders input::-webkit-slider-thumb{appearance:none;width:15px;height:13px;margin-top:7px;background:#c4c4c4;clip-path:polygon(50% 0,100% 50%,100% 100%,0 100%,0 50%);}
.r{--tint:#0ff;}
.g{--tint:#f0f;}
.b{--tint:#ff0;}
.hexrow{display:flex;align-items:center;margin:8px 0;font:15px/24px "Liberation Mono",monospace;}
.hexrow label{margin-left:auto;color:#ccc;}
.hexrow input{width:68px;margin-left:6px;padding-bottom:2px;}
.presets{display:flex;border:1px solid #222;}
.presets i{width:19px;height:19px;background:#fff;}
.presets .none{background:linear-gradient(135deg,#fff 46%,#d00 46% 54%,#fff 54%);}
.presets .black{background:#000;}
.spectrum{height:285px;margin:0 1px;border:1px solid #333;background:linear-gradient(#fff,rgba(255,255,255,0) 50%,rgba(0,0,0,0) 50%,#000),linear-gradient(90deg,#f00,#ff0,#0f0,#0ff,#00f,#f0f,#f00);}
.pathfinder{padding:6px 20px 12px 9px;}
.pathfinder h3{color:#bcbcbc;font-size:18px;font-weight:400;line-height:24px;}
.shapes{display:flex;align-items:center;gap:33px;height:32px;margin:9px 0 11px;padding-left:9px;}
.shapes svg{fill:#c8c8c8;}
.shapes .line{fill:none;stroke:#c8c8c8;stroke-width:1.5;}
.shapes .faint{stroke:#8a8a8a;}
.shapes .thin{fill:none;stroke:#777;}
.shapes button{width:112px;height:31px;margin-left:-8px;border-radius:3px;background:#595959;color:#757575;}
.six{gap:35px;margin:7px 0 0;padding-left:13px;}
```
